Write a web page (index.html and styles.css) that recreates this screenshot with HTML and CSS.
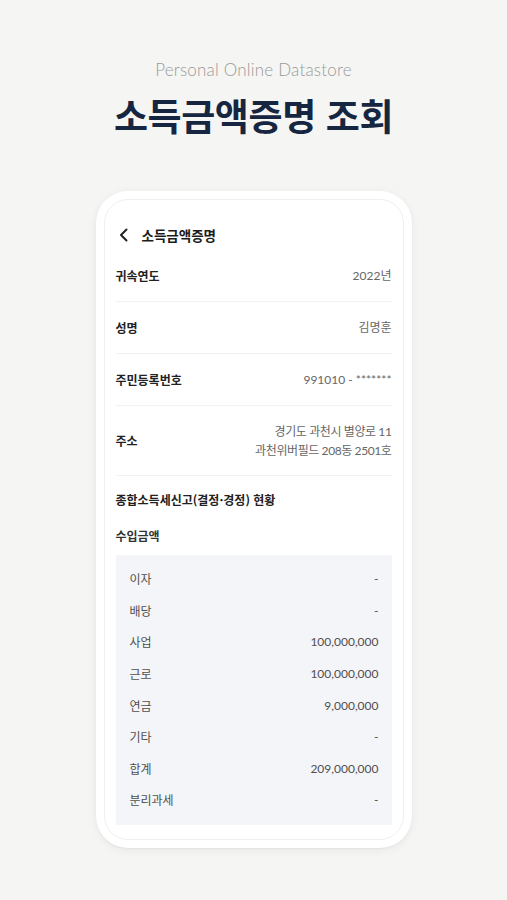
FILE: index.html
```html
<!DOCTYPE html>
<html lang="ko">
<head>
<meta charset="utf-8">
<link rel="stylesheet" href="styles.css">
</head>
<body>
<main class="page">
  <p class="subtitle">Personal Online Datastore</p>
  <h1 class="title">소득금액증명 조회</h1>
  <div class="phone">
    <div class="screen">
      <div class="nav">
        <svg class="back" width="10" height="14" viewBox="0 0 10 14"><path d="M7.5 1.5 L2 7 L7.5 12.5" fill="none" stroke="#222" stroke-width="2" stroke-linecap="round" stroke-linejoin="round"/></svg>
        <span class="nav-title">소득금액증명</span>
      </div>
      <div class="row"><span class="label">귀속연도</span><span class="value">2022년</span></div>
      <div class="row"><span class="label">성명</span><span class="value">김명훈</span></div>
      <div class="row"><span class="label">주민등록번호</span><span class="value">991010 - *******</span></div>
      <div class="row"><span class="label">주소</span><span class="value addr">경기도 과천시 별양로 11<br>과천위버필드 208동 2501호</span></div>
      <h2 class="section">종합소득세신고(결정·경정) 현황</h2>
      <h3 class="sub">수입금액</h3>
      <div class="table">
        <div class="trow"><span>이자</span><span>-</span></div>
        <div class="trow"><span>배당</span><span>-</span></div>
        <div class="trow"><span>사업</span><span>100,000,000</span></div>
        <div class="trow"><span>근로</span><span>100,000,000</span></div>
        <div class="trow"><span>연금</span><span>9,000,000</span></div>
        <div class="trow"><span>기타</span><span>-</span></div>
        <div class="trow"><span>합계</span><span>209,000,000</span></div>
        <div class="trow"><span>분리과세</span><span>-</span></div>
      </div>
    </div>
  </div>
</main>
</body>
</html>
```

FILE: styles.css
```css
* { box-sizing: border-box; }
html, body {
  margin: 0;
  padding: 0;
  background: #f5f5f3;
}
body {
  font-family: Lato, "Noto Sans CJK KR", sans-serif;
  color: #222;
}
.page {
  width: 507px;
  height: 900px;
  display: flex;
  flex-direction: column;
  align-items: center;
}
.subtitle {
  margin: 60px 0 0;
  font-family: Lato, sans-serif;
  font-weight: 300;
  font-size: 17px;
  line-height: 20px;
  color: #9a9a9a;
  letter-spacing: 0.2px;
}
.title {
  margin: 12px 0 0;
  font-family: "Noto Sans CJK KR", sans-serif;
  font-weight: 700;
  font-size: 37px;
  line-height: 46px;
  letter-spacing: -0.4px;
  color: #172640;
}
.phone {
  margin-top: 53px;
  width: 316px;
  padding: 8px;
  background: #fff;
  border-radius: 32px;
  box-shadow: 0 2px 10px rgba(0,0,0,0.06), 0 1px 2px rgba(0,0,0,0.04);
}
.screen {
  border: 1px solid #efefef;
  border-radius: 24px;
  padding: 0 11px 14px 11px;
  background: #fff;
}
.nav {
  display: flex;
  align-items: center;
  gap: 13px;
  padding: 23px 0 4px 3px;
  height: 50px;
}
.back { display: block; }
.nav-title {
  font-family: "Noto Sans CJK KR", sans-serif;
  font-weight: 700;
  font-size: 13.5px;
  line-height: 22px;
  color: #1c1c1c;
}
.row {
  display: flex;
  justify-content: space-between;
  align-items: center;
  padding: 15.5px 0;
  border-bottom: 1px solid #f2f2f2;
}
.label {
  font-family: "Noto Sans CJK KR", sans-serif;
  font-weight: 700;
  font-size: 12px;
  line-height: 20px;
  color: #222;
}
.value {
  font-size: 12px;
  line-height: 20px;
  color: #666;
  text-align: right;
}
.addr {
  line-height: 19px;
  letter-spacing: -0.4px;
}
.section {
  margin: 14px 0 0;
  font-family: "Noto Sans CJK KR", sans-serif;
  font-weight: 700;
  font-size: 12px;
  line-height: 20px;
  color: #222;
}
.sub {
  margin: 16px 0 0;
  font-family: "Noto Sans CJK KR", sans-serif;
  font-weight: 700;
  font-size: 12px;
  line-height: 20px;
  color: #333;
}
.table {
  margin-top: 9px;
  background: #f3f5f8;
  padding: 8px 13px 9px 14px;
}
.trow {
  display: flex;
  justify-content: space-between;
  align-items: center;
  height: 31.6px;
  font-size: 12px;
  color: #505050;
}
```
